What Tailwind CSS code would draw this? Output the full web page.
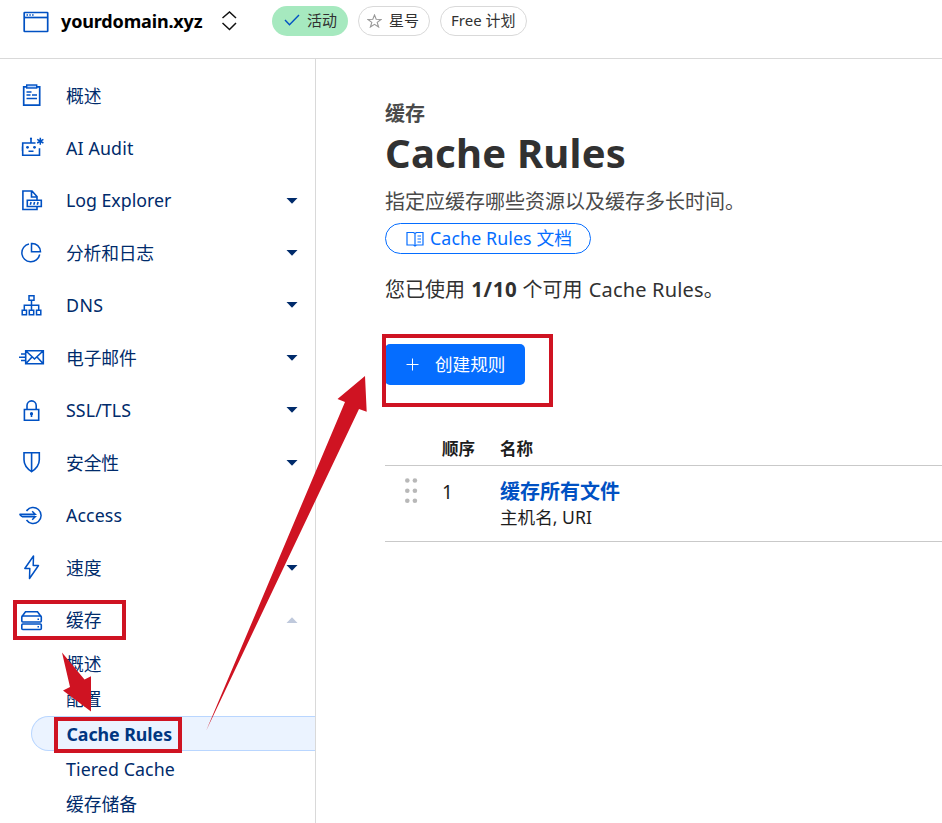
<!DOCTYPE html>
<html lang="zh-CN">
<head>
<meta charset="utf-8">
<title>Cache Rules</title>
<script src="https://cdn.jsdelivr.net/npm/@tailwindcss/browser@4"></script>
</head>
<body class="relative h-[823px] w-[942px] overflow-hidden bg-white font-['Noto_Sans','Noto_Sans_CJK_SC',sans-serif] text-[#313131]">
<div class="flex h-full flex-col">
  <header class="flex h-[59px] shrink-0 items-start border-b border-[#d9d9d9] pl-[23px]">
    <svg class="mt-[11px] shrink-0" width="26" height="22" viewBox="0 0 26 22" fill="none" stroke="#0051c3" stroke-width="1.700"><rect x="1.200" y="1.500" width="23.500" height="19" rx=".5"/><path d="M1 6.500h24"/><path d="M3.500 4h1.500m1.300 0h1.500m1.300 0h1.500" stroke-width="1.400"/></svg>
    <div class="ml-[12px] mt-[6px] w-[142px] whitespace-nowrap text-[18px] font-bold leading-[30px] tracking-[-0.150px] text-black">yourdomain.xyz</div>
    <svg class="ml-[19px] mt-[11px] shrink-0" width="16" height="20" viewBox="0 0 16 20" fill="none" stroke="#111" stroke-width="1.500"><path d="M.5 7l7-6 6.500 6M.5 12l7 6.500 6.500-6.500"/></svg>
    <div class="ml-[34px] mt-[6px] flex h-[30px] w-[76px] items-center rounded-full bg-[#a6e9bf] pl-[12px] pb-[2px] text-[15px] leading-none"><svg class="mr-[7px]" width="16" height="12" viewBox="0 0 16 12" fill="none" stroke="#0051c3" stroke-width="1.400"><path d="M1 6l4.500 4.800L15 1"/></svg>活动</div>
    <div class="ml-[10px] mt-[6px] flex h-[30px] w-[72px] items-center rounded-full border border-[#d9d9d9] pl-[8px] pb-[2px] text-[15px] leading-none"><svg class="mr-[7px] mt-px" width="15" height="14" viewBox="0 0 15 14" fill="none" stroke="#999" stroke-width="1.100"><path d="M7.500 1l1.700 4.300 4.800.2-3.800 2.900 1.400 4.600-4.100-2.700L3.400 13l1.400-4.600L1 5.500l4.800-.2z"/></svg>星号</div>
    <div class="ml-[10px] mt-[6px] flex h-[30px] w-[87px] items-center whitespace-nowrap rounded-full border border-[#d9d9d9] pb-[2px] pl-[10px] text-[15px] leading-none">Free 计划</div>
  </header>
  <div class="flex min-h-0 flex-1">
    <nav class="w-[316px] shrink-0 border-r border-[#d9d9d9] pt-[10px] text-[17.800px] leading-none text-[#002b6b]">
      <div class="flex h-[52.450px] items-center"><svg class="ml-[17px] mr-[21px] shrink-0" width="28" height="28" viewBox="0 0 28 28" fill="none" stroke="#0051c3" stroke-width="1.700"><path d="M9.500 5.800H6.700v18.400h16V5.800h-2.700"/><rect x="9.700" y="4" width="10" height="3" fill="#b9d6ff" stroke-width="1.400"/><path d="M9.500 11h5M9.500 14h4m1.500 0h5M9.500 17.500h10.500" stroke-width="1.500"/></svg><span class="pt-[3px]">概述</span></div>
      <div class="flex h-[52.450px] items-center"><svg class="ml-[17px] mr-[21px] shrink-0" width="28" height="28" viewBox="0 0 28 28" fill="none" stroke="#0051c3" stroke-width="1.600"><path d="M18.500 9H5.700v12.300h16.800v-7M14 8.500V4.500M5.500 12.500v4.500M11.500 17.300h5"/><circle cx="14" cy="4.500" r="1.100" fill="#0051c3" stroke="none"/><circle cx="10.500" cy="13.300" r="1.400" fill="#0051c3" stroke="none"/><circle cx="17.500" cy="13.300" r="1.400" fill="#0051c3" stroke="none"/><path d="M23.300 3.700v7M20.200 5.400l6.200 3.600M20.200 9l6.200-3.600" stroke-width="1.500"/></svg><span class="pt-[2px] tracking-[0.150px]">AI Audit</span></div>
      <div class="flex h-[52.450px] items-center"><svg class="ml-[17px] mr-[21px] shrink-0" width="28" height="28" viewBox="0 0 28 28" fill="none" stroke="#0051c3" stroke-width="1.600"><path d="M20 14v-3.500l-5-5.500H5.900v18.500H20v-3M14.500 5v6H20M10.300 14.300h14v6.200h-14z"/><path d="M13.300 18.700l.8-2.600m2.700 2.600l.8-2.600m2.700 2.600l.8-2.600"/></svg><span class="pt-[2px] tracking-[-0.030px]">Log Explorer</span><svg class="ml-auto mr-[17px] mt-px" width="12" height="6"><path d="M.5 0h11L6 5.800z" fill="#002b6b"/></svg></div>
      <div class="flex h-[52.450px] items-center"><svg class="ml-[17px] mr-[21px] shrink-0" width="28" height="28" viewBox="0 0 28 28" fill="none" stroke="#0051c3" stroke-width="1.500"><path d="M12 5A9 9 0 1 0 22.700 15.500M14.500 4.400V12.800h9A8.500 8.500 0 0 0 14.500 4.400z"/></svg><span class="pt-[2px] tracking-[-0.200px]">分析和日志</span><svg class="ml-auto mr-[17px]" width="12" height="6"><path d="M.5 0h11L6 5.800z" fill="#002b6b"/></svg></div>
      <div class="flex h-[52.450px] items-center"><svg class="ml-[17px] mr-[21px] shrink-0" width="28" height="28" viewBox="0 0 28 28" fill="none" stroke="#0051c3" stroke-width="1.500"><path d="M12 4.700h5v4.500h-5zM5.200 19.300h4.300v4.500H5.200zM12.300 19.300h4.400v4.500h-4.400zM19.500 19.300h4.300v4.500h-4.300zM14.500 9.200v10M7.300 19v-4.700h14.400V19"/></svg><span class="pt-[2px] tracking-[0.400px]">DNS</span><svg class="ml-auto mr-[17px]" width="12" height="6"><path d="M.5 0h11L6 5.800z" fill="#002b6b"/></svg></div>
      <div class="flex h-[52.450px] items-center"><svg class="ml-[17px] mr-[21px] shrink-0" width="28" height="28" viewBox="0 0 28 28" fill="none" stroke="#0051c3" stroke-width="1.600"><path d="M8.700 7.700h17.600v13H8.700zM9 8l8.500 8L26 8M9 20.500l6-6.500M26 20.500l-6-6.500M4 11h4M2 14.200h6M4 17.500h4"/></svg><span class="pt-[2px] tracking-[-0.150px]">电子邮件</span><svg class="ml-auto mr-[17px] mt-px" width="12" height="6"><path d="M.5 0h11L6 5.800z" fill="#002b6b"/></svg></div>
      <div class="flex h-[52.450px] items-center"><svg class="ml-[17px] mr-[21px] shrink-0" width="28" height="28" viewBox="0 0 28 28" fill="none" stroke="#0051c3" stroke-width="1.600"><path d="M7.400 13.500h14.300v10.700H7.400zM10 13V9.500a4.600 4.600 0 0 1 9.200 0V13M14.500 18v3"/><circle cx="14.500" cy="17.700" r=".8"/></svg><span class="pt-[2px] tracking-[0.100px]">SSL/TLS</span><svg class="ml-auto mr-[17px] mt-px" width="12" height="6"><path d="M.5 0h11L6 5.800z" fill="#002b6b"/></svg></div>
      <div class="flex h-[52.450px] items-center"><svg class="ml-[17px] mr-[21px] shrink-0" width="28" height="28" viewBox="0 0 28 28" fill="none" stroke="#0051c3" stroke-width="1.600"><path d="M7 4.700h15.300v7c0 6-4 9.500-7.700 12-3.700-2.500-7.600-6-7.600-12zM14.600 4.700v18.800"/></svg><span class="pt-[4px] tracking-[-0.150px]">安全性</span><svg class="ml-auto mr-[17px] mt-px" width="12" height="6"><path d="M.5 0h11L6 5.800z" fill="#002b6b"/></svg></div>
      <div class="flex h-[52.450px] items-center"><svg class="ml-[17px] mr-[21px] shrink-0" width="28" height="28" viewBox="0 0 28 28" fill="none" stroke="#0051c3" stroke-width="1.500"><path d="M4 14.500h14" stroke="#8bb8f5" stroke-width="2"/><path d="M9.500 10a8 8 0 1 1 0 9M2.500 13.200h15.700l-3-3M5 15.800h13.200l-3 3M2.500 13.200l2.500 2.600"/></svg><span class="pt-[2px] tracking-[0.080px]">Access</span></div>
      <div class="flex h-[52.450px] items-center"><svg class="ml-[17px] mr-[21px] shrink-0" width="28" height="28" viewBox="0 0 28 28" fill="none" stroke="#0051c3" stroke-width="1.500" stroke-linejoin="round"><path d="M16.500 3L7.800 15.500h5L12.500 25.500 21.500 12.500h-5.300z"/></svg><span class="pt-[4px]">速度</span><svg class="ml-auto mr-[17px] mt-px" width="12" height="6"><path d="M.5 0h11L6 5.800z" fill="#002b6b"/></svg></div>
      <div class="flex h-[52.450px] items-center"><svg class="ml-[17px] mr-[21px] shrink-0" width="28" height="28" viewBox="0 0 28 28" fill="none" stroke="#0051c3" stroke-width="1.600"><rect x="4.800" y="10" width="19.500" height="6" rx="1"/><rect x="4.800" y="18" width="19.500" height="5.500" rx="1"/><path d="M5 10.500l3.500-4.700h12l3.500 4.700M20.500 13.300h1.500M20.500 20.800h1.500"/></svg><span class="pt-[2px]">缓存</span><svg class="ml-auto mr-[17px]" width="12" height="6"><path d="M.5 6h11L6 .2z" fill="#bfc9dc"/></svg></div>
      <div class="flex h-[35px] items-center pl-[66px]"><span class="pt-[4px]">概述</span></div>
      <div class="flex h-[35px] items-center pl-[66px]"><span class="pt-[4px]">配置</span></div>
      <div class="ml-[31px] flex h-[35px] items-center rounded-l-full border border-r-0 border-[#b9d6ff] bg-[#ebf3ff] pl-[34.500px] font-bold text-[#003681]"><span class="pt-[4px] tracking-[-0.050px]">Cache Rules</span></div>
      <div class="flex h-[35px] items-center pl-[66px]"><span class="pt-[4px] tracking-[0.080px]">Tiered Cache</span></div>
      <div class="flex h-[35px] items-center pl-[66px]"><span class="pt-[4px]">缓存储备</span></div>
    </nav>
    <main class="min-w-0 flex-1 pl-[69px] pt-[40px]">
      <div class="h-[29px] text-[20px] font-bold leading-[30px] text-[#4a4a4a]">缓存</div>
      <h1 class="h-[50px] whitespace-nowrap text-[40px] font-bold leading-[50px] tracking-[0.220px]">Cache Rules</h1>
      <p class="mt-[9px] h-[29px] text-[20px] leading-[30px] text-[#4a4a4a]">指定应缓存哪些资源以及缓存多长时间。</p>
      <a class="mt-[7px] flex h-[31px] w-[206px] items-center whitespace-nowrap rounded-full border border-[#056dff] pl-[20px] text-[17.800px] leading-none text-[#056dff]"><svg class="mr-[6px]" width="18" height="16" viewBox="0 0 18 16" fill="none" stroke="#056dff" stroke-width="1.200"><path d="M1 1.500h6.500L9 2.500l1.500-1H17v12.500h-6.500L9 15l-1.500-1H1zM9 2.500V15M11.500 5h3.500M11.500 8h3.500M11.500 11h3.500"/></svg><span class="tracking-[0.100px]">Cache Rules 文档</span></a>
      <p class="mt-[20px] h-[30px] whitespace-nowrap text-[20px] leading-[30px]">您已使用 <b class="ml-px text-[20.500px] tracking-[0.600px]">1/10</b> <span>个可用</span> <span class="ml-px tracking-[0.180px]">Cache Rules</span>。</p>
      <button class="mt-[40px] flex h-[41px] w-[140px] items-center rounded-[5px] bg-[#056dff] pl-[21px] text-[17.600px] leading-none text-white"><svg class="mr-[16px]" width="13" height="13" viewBox="0 0 13 13" stroke="#fff" stroke-width="1"><path d="M.5 6.500h12M6.500.5v12"/></svg>创建规则</button>
      <section class="mt-[46px]">
        <div class="flex h-[35px] border-b border-[#c9c9c9] text-[16.500px] font-bold leading-[36px] text-[#1d1d1d]"><span class="w-[115px] pl-[57px]">顺序</span><span>名称</span></div>
        <div class="flex h-[76px] border-b border-[#c9c9c9] text-[17.600px] text-[#1d1d1d]">
          <svg class="ml-[19px] mt-[12px] shrink-0" width="14" height="26" fill="#b8b8b8"><circle cx="3.300" cy="2.500" r="2.300"/><circle cx="10.900" cy="2.500" r="2.300"/><circle cx="3.300" cy="12.700" r="2.300"/><circle cx="10.900" cy="12.700" r="2.300"/><circle cx="3.300" cy="22.800" r="2.300"/><circle cx="10.900" cy="22.800" r="2.300"/></svg>
          <span class="w-[82px] pl-[24px] pt-[13px] text-[19px] leading-[26px]">1</span>
          <div class="pt-[13px]"><div class="h-[25px] text-[20px] font-bold leading-[26px] text-[#0051c3]">缓存所有文件</div><div class="leading-[26px]">主机名, URI</div></div>
        </div>
      </section>
    </main>
  </div>
</div>
<!-- Annotation overlay: highlight boxes and arrows -->
<svg class="pointer-events-none absolute left-0 top-0" width="942" height="823" viewBox="0 0 942 823" fill="none">
  <g stroke="#cf1322" stroke-width="4"><path d="M15 602h109v36H15zM56 719h124v32H56zM384 336h167v69H384z"/></g>
  <path fill="#cf1322" d="M365 376L337.500 399l7.500 3L206 731 359 409l7.700 2.800zM62 652.500L70 687l-7 3.500L91 711.500V676.300L84.500 679.500z"/>
</svg>
</body>
</html>
